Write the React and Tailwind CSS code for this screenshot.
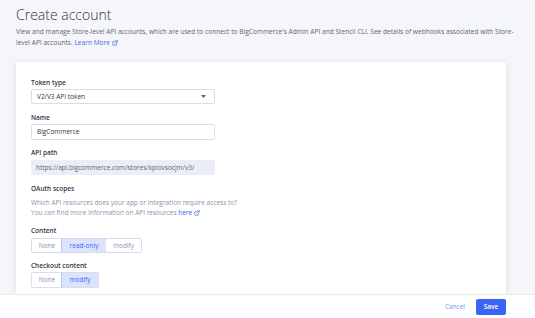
import { ExternalLink } from "lucide-react";

const font = { fontFamily: '"Open Sans", "Liberation Sans", sans-serif' };

function Label({ children, className = "" }) {
  return (
    <div className={`text-[6.5px] leading-[8px] font-semibold text-[#313440] ${className}`}>
      {children}
    </div>
  );
}

function Segmented({ options, active }) {
  return (
    <div className="flex w-fit rounded-[2px] border border-[#d9dce9] overflow-hidden">
      {options.map((o) => (
        <div
          key={o.label}
          className={`flex items-center justify-center text-[6.5px] ${o.w} ${
            o.label === active
              ? "bg-[#dbe3fe] text-[#3c64f4] outline outline-1 outline-[#b9c7fb]"
              : "bg-white text-[#8c93ad]"
          }`}
        >
          {o.label}
        </div>
      ))}
    </div>
  );
}

export default function App() {
  return (
    <div className="h-[318px] w-[535px] bg-[#f5f6fa] flex flex-col overflow-hidden" style={font}>
      {/* Header */}
      <div className="px-4 pt-[6px]">
        <h1 className="text-[14px] leading-[18px] font-light text-[#313440]">Create account</h1>
        <p className="mt-[2px] text-[6.6px] leading-[11px] text-[#5e637a] whitespace-nowrap">
          View and manage Store-level API accounts, which are used to connect to BigCommerce's Admin API and
          Stencil CLI. See details of webhooks associated with Store-
          <br />
          level API accounts.{" "}
          <span className="text-[#3c64f4]">
            Learn More <ExternalLink size={6} strokeWidth={2.5} className="inline align-[-1px]" />
          </span>
        </p>
      </div>

      {/* Card */}
      <div className="flex-1 px-4 pt-[14px] overflow-hidden">
        <div className="w-[490px] h-full bg-white rounded-t-[2px] shadow-[0_1px_6px_rgba(49,52,64,0.12)] pt-[17px] px-[15px]">
          <Label>Token type</Label>
          <div className="mt-[2px] w-[184px] h-[15px] border border-[#d9dce9] rounded-[2px] flex items-center justify-between px-[5px]">
            <span className="text-[6.5px] text-[#313440]">V2/V3 API token</span>
            <svg width="5" height="3" viewBox="0 0 5 3" className="mr-[3px]">
              <path d="M0 0h5L2.5 3z" fill="#5e637a" />
            </svg>
          </div>

          <Label className="mt-[10px]">Name</Label>
          <div className="mt-[2px] w-[184px] h-[16px] border border-[#d9dce9] rounded-[2px] flex items-center px-[5px]">
            <span className="text-[6.5px] text-[#313440]">BigCommerce</span>
          </div>

          <Label className="mt-[9px]">API path</Label>
          <div className="mt-[3px] w-[184px] h-[15px] bg-[#eceef5] rounded-[2px] flex items-center px-[5px]">
            <span className="text-[6.5px] text-[#5e637a]">https://api.bigcommerce.com/stores/kplovsocjm/v3/</span>
          </div>

          <Label className="mt-[10px]">OAuth scopes</Label>
          <div className="mt-[5px] text-[6.5px] leading-[10px] text-[#8c93ad]">
            <div>Which API resources does your app or integration require access to?</div>
            <div>
              You can find more information on API resources{" "}
              <span className="text-[#3c64f4]">
                here <ExternalLink size={6} strokeWidth={2.5} className="inline align-[-1px]" />
              </span>
            </div>
          </div>

          <Label className="mt-[9px]">Content</Label>
          <div className="mt-[3px] h-[15px] flex">
            <Segmented
              active="read-only"
              options={[
                { label: "None", w: "w-[30px]" },
                { label: "read-only", w: "w-[44px]" },
                { label: "modify", w: "w-[35px]" },
              ]}
            />
          </div>

          <Label className="mt-[9px]">Checkout content</Label>
          <div className="mt-[2px] h-[16px] flex">
            <Segmented
              active="modify"
              options={[
                { label: "None", w: "w-[30px]" },
                { label: "modify", w: "w-[36px]" },
              ]}
            />
          </div>
        </div>
      </div>

      {/* Footer */}
      <div className="h-[24px] shrink-0 bg-white border-t border-[#e8eaf1] flex items-center justify-end gap-[11px] pr-[29px]">
        <span className="text-[6.5px] text-[#7b93f7]">Cancel</span>
        <button className="w-[30px] h-[16px] bg-[#3c64f4] rounded-[2px] text-white text-[6.5px] font-semibold">
          Save
        </button>
      </div>
    </div>
  );
}
